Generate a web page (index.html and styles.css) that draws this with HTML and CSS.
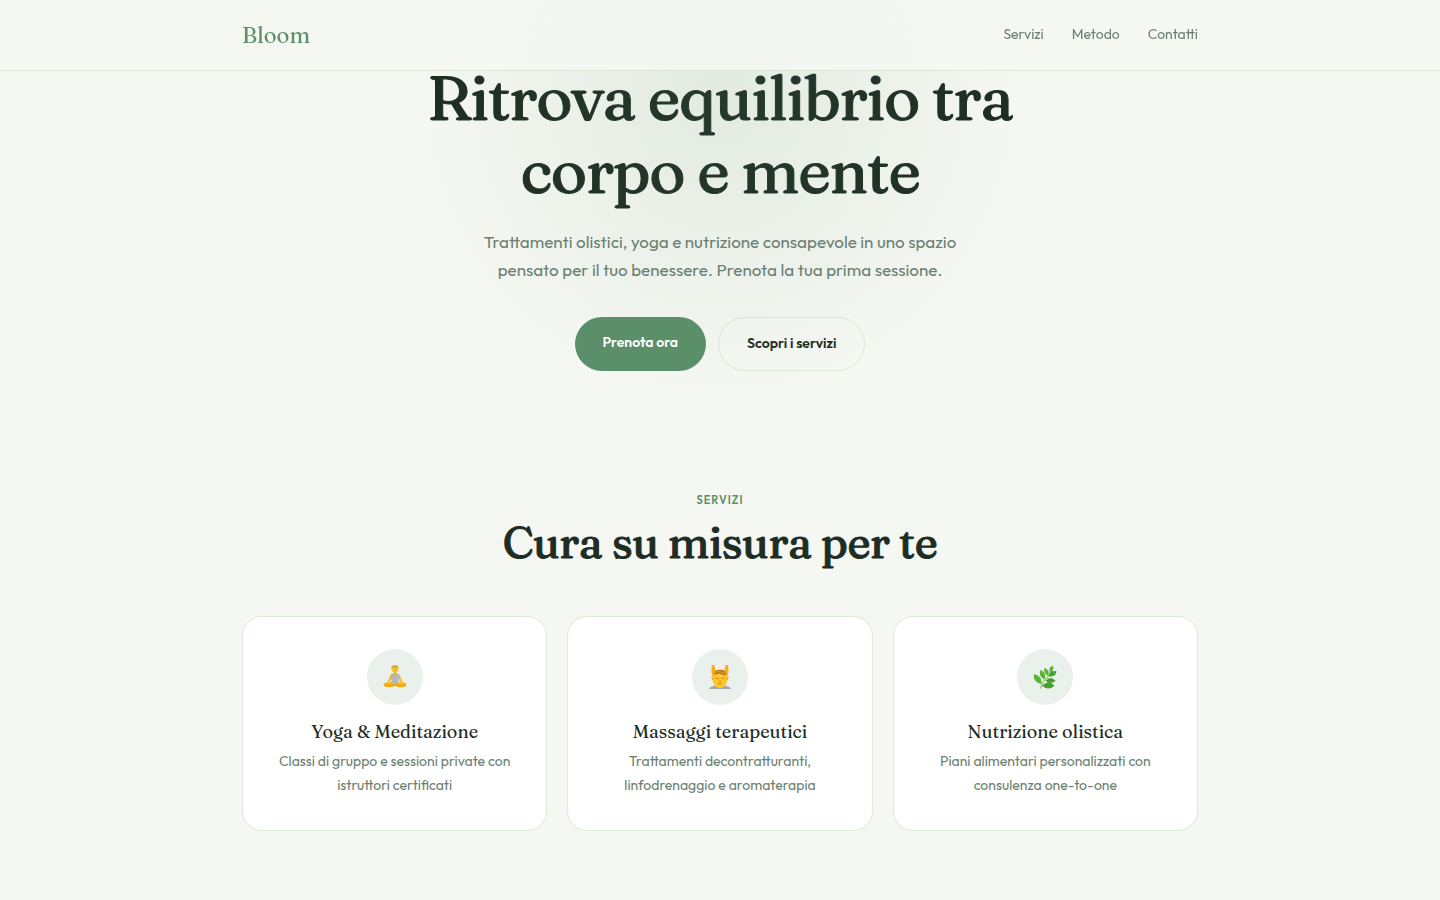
FILE: index.html
```html
<!DOCTYPE html>
<html lang="it">
<head>
  <meta charset="UTF-8">
  <meta name="viewport" content="width=device-width, initial-scale=1.0">
  <title>Bloom - Centro benessere</title>
  <link rel="stylesheet" href="styles.css">
</head>
<body>
  <header>
    <nav class="container nav">
      <a href="#" class="logo">Bloom</a>
      <div class="nav-links">
        <a href="#servizi">Servizi</a>
        <a href="#metodo">Metodo</a>
        <a href="#contatti">Contatti</a>
      </div>
    </nav>
  </header>

  <main>
    <section class="hero">
      <h1>Ritrova equilibrio tra corpo e mente</h1>
      <p>Trattamenti olistici, yoga e nutrizione consapevole in uno spazio pensato per il tuo benessere. Prenota la tua prima sessione.</p>
      <div class="hero-actions">
        <a href="#contatti" class="btn btn-primary">Prenota ora</a>
        <a href="#servizi" class="btn btn-outline">Scopri i servizi</a>
      </div>
    </section>

    <section id="servizi" class="container services">
      <div class="section-label">Servizi</div>
      <h2>Cura su misura per te</h2>
      <div class="cards">
        <article class="card">
          <div class="card-icon">
            <svg viewBox="0 0 24 24" width="24" height="24" aria-hidden="true">
              <path d="M9.300 8.600Q7.600 8.800 7 10.500L5.400 15 3.600 18.600 5 19.400 7.400 15.800 9 12.500h6l1.600 3.300 2.400 3.600 1.400-.8L18.600 15 17 10.500q-.6-1.700-2.300-1.900z" fill="#fbbc1c"/>
              <path d="M8.400 9 10.200 8.700q1.800 2.600 3.600 0l1.800.3.600 3.600-.8 3 1.300 3.400H7.300l1.300-3.400-.8-3z" fill="#b5b7bf"/>
              <path d="M.8 18.200q2-.9 4.800-.5l3.200-.2q2 .3 3.200 1.900 1.200-1.600 3.200-1.900l3.200.2q2.800-.4 4.800.5.500 2.400-.7 3.100-1.600.9-4.100.9-3.600.1-6.400-1.500-2.800 1.600-6.400 1.500-2.500 0-4.100-.9-1.200-.7-.7-3.100z" fill="#fbb71a"/>
              <path d="m6.500 21.300 5.500-1.800 5.500 1.800M1.500 20.300l4.500.6m16.500-.6-4.500.6" fill="none" stroke="#d98a12" stroke-width=".7"/>
              <path d="M10.800 6h2.400v3.200q-1.200 1.400-2.400 0z" fill="#eda617"/>
              <ellipse cx="12" cy="4" rx="3.500" ry="3.500" fill="#fdc52b"/>
              <path d="M8.400 3.500Q8 .2 12 .2t3.600 3.300L14.200 2.400l-4.400.2z" fill="#dda42a"/>
              <path d="m10.500 4 .9.100m1.200 0 .9-.1m-2.300 1.700h1.600" fill="none" stroke="#9b6411" stroke-width=".5"/>
            </svg>
          </div>
          <h3>Yoga &amp; Meditazione</h3>
          <p>Classi di gruppo e sessioni private con istruttori certificati</p>
        </article>
        <article class="card">
          <div class="card-icon">
            <svg viewBox="0 0 24 24" width="24" height="24" aria-hidden="true">
              <path d="M1 24q.5-3 8-3.500h6q7.500.5 8 3.500z" fill="#a1a6ac"/>
              <path d="M9.500 19h5v3q-2.500 2-5 0z" fill="#dc940e"/>
              <path d="M4.400 11q-1.200 0-.8 2.200.3 2.300 1.800 2.300zm15.200 0q1.200 0 .8 2.200-.3 2.300-1.800 2.300z" fill="#e5a018"/>
              <path d="M4.800 7q0-4.500 7.200-4.500T19.200 7v8.500q-.9 7.500-7.200 7.500t-7.200-7.500z" fill="#fdc62b"/>
              <path d="M6.500 1.500Q12-.8 17.500 1.500l-.6 3.900H7.100z" fill="#f8eee2"/>
              <path d="M6 9.300Q5.500 4.800 12 4.800t6 4.500l-.2 1.200q-4.300-.2-6.300-1.900-2.500 1.100-5.500.7z" fill="#b77817"/>
              <path d="m7.500 7.200 4-.7 5.500 2.300" fill="none" stroke="#e9aa34" stroke-width=".8"/>
              <path d="M3.800.4q1.300-1.300 2.800 0l.8 4.900-1.500 4.700-1.600 1Q3 7 3.800.4zm16.400 0q-1.300-1.300-2.800 0l-.8 4.900 1.500 4.700 1.600 1Q21 7 20.200.4z" fill="#f7ad19"/>
              <path d="M7.700 13.300q1.400.9 2.800 0m3 0q1.400.9 2.800 0m-5.300 2.900q1 .7 2 0m-2.800 2.300q1.800 1 3.600 0" fill="none" stroke="#b57a18" stroke-width=".7" stroke-linecap="round"/>
            </svg>
          </div>
          <h3>Massaggi terapeutici</h3>
          <p>Trattamenti decontratturanti, linfodrenaggio e aromaterapia</p>
        </article>
        <article class="card">
          <div class="card-icon">
            <svg viewBox="0 0 24 24" width="24" height="24" aria-hidden="true">
              <path d="M7.500 23.500Q8.500 17 13.500 13.500 17 10 18.500 5" fill="none" stroke="#7eac55" stroke-width="1"/>
              <g fill="#5ab536">
                <path d="M8.500 19Q-.5 17.500 1 9q8.500 2 7.500 10z"/>
                <path d="M11.800 14.500Q5 11.500 7.500 4.800q6.500 3.300 4.300 9.700z"/>
                <path d="M15.200 11Q9.500 8 11.700 2.800q6 3 3.500 8.200z"/>
                <path d="M17.300 7.500Q14.500 3 19.800.5q2 4.500-2.500 7z"/>
              </g>
              <g fill="#449f2c">
                <path d="M9 20.700q6.500-7 12.500 0-6 5.600-12.500 0z"/>
                <path d="M12.500 15.800q5-5.500 10 0-5 4.500-10 0z"/>
                <path d="M15.500 11.200q2-6.500 8-4.900-1 6.400-8 4.900z"/>
              </g>
            </svg>
          </div>
          <h3>Nutrizione olistica</h3>
          <p>Piani alimentari personalizzati con consulenza one-to-one</p>
        </article>
      </div>
    </section>
  </main>
</body>
</html>
```
FILE: styles.css
```css
:root {
  --bg: #f5f7f2;
  --text: #1e2d24;
  --muted: #6b7f72;
  --green: #5b8f6a;
  --border: #dce8d8;
  --serif: "Fraunces", "Liberation Serif", serif;
  --sans: "Outfit", Lato, sans-serif;
}

* {
  margin: 0;
  padding: 0;
  box-sizing: border-box;
}

body {
  font-family: var(--sans);
  line-height: 24px;
  background: var(--bg);
  color: var(--text);
}

a {
  color: inherit;
  text-decoration: none;
}

.container {
  max-width: 1004px;
  margin: 0 auto;
  padding: 0 24px;
}

header {
  position: sticky;
  top: 0;
  z-index: 10;
  background:
    radial-gradient(150px 44px at 50% 0, rgba(30, 45, 36, 0.01), transparent),
    rgba(245, 247, 242, 0.85);
  border-bottom: 1px solid var(--border);
  backdrop-filter: blur(12px);
}

.nav {
  display: flex;
  align-items: center;
  justify-content: space-between;
  height: 70px;
}

.logo {
  font-family: var(--serif);
  font-size: 22px;
  font-weight: 500;
  color: var(--green);
}

.nav-links {
  display: flex;
  gap: 28px;
  padding-bottom: 2px;
  font-size: 14px;
  color: var(--muted);
}

.hero {
  position: relative;
  padding: 0 24px 80px;
  text-align: center;
}

/* soft glow over the hero */
.hero::before {
  content: "";
  position: absolute;
  top: -264px;
  left: 50%;
  width: 600px;
  height: 600px;
  transform: translateX(-50%);
  background: radial-gradient(circle, rgba(91, 143, 106, 0.12), transparent 70%);
  pointer-events: none;
}

h1,
h2,
h3 {
  font-family: var(--serif);
  font-weight: 500;
}

h1,
h2 {
  -webkit-text-stroke: 1px;
}

h1 {
  max-width: 700px;
  margin: -10px auto 21px;
  font-size: 62px;
  line-height: 73px;
  letter-spacing: -0.02em;
}

.hero p {
  max-width: 480px;
  margin: 0 auto 33px;
  font-size: 17px;
  line-height: 28px;
  color: var(--muted);
}

.hero-actions {
  display: flex;
  justify-content: center;
  gap: 12px;
}

.btn {
  padding: 13px 28px 15px;
  border-radius: 50px;
  font-size: 14px;
  font-weight: 600;
}

.btn-primary {
  background: var(--green);
  color: #fff;
}

.btn-outline {
  border: 1px solid var(--border);
}

.services {
  padding-top: 37px;
  padding-bottom: 69px;
  text-align: center;
}

.section-label {
  font-size: 11px;
  font-weight: 600;
  letter-spacing: 1px;
  text-transform: uppercase;
  color: var(--green);
}

h2 {
  margin-bottom: 44px;
  font-size: 44px;
  line-height: 60px;
  letter-spacing: -0.01em;
}

.cards {
  display: grid;
  grid-template-columns: repeat(3, 1fr);
  gap: 20px;
}

.card {
  padding: 32px 28px 33px;
  background: #fff;
  border: 1px solid var(--border);
  border-radius: 20px;
}

.card-icon {
  display: flex;
  align-items: center;
  justify-content: center;
  width: 56px;
  height: 56px;
  margin: 0 auto 14px;
  border-radius: 50%;
  background: #eaf0ec;
}

h3 {
  margin-bottom: 4px;
  font-size: 18px;
  line-height: 26px;
}

.card p {
  font-size: 14px;
  color: var(--muted);
}

@media (max-width: 800px) {
  h1 {
    font-size: 48px;
    line-height: 56px;
  }

  .cards {
    grid-template-columns: 1fr;
  }
}
```
